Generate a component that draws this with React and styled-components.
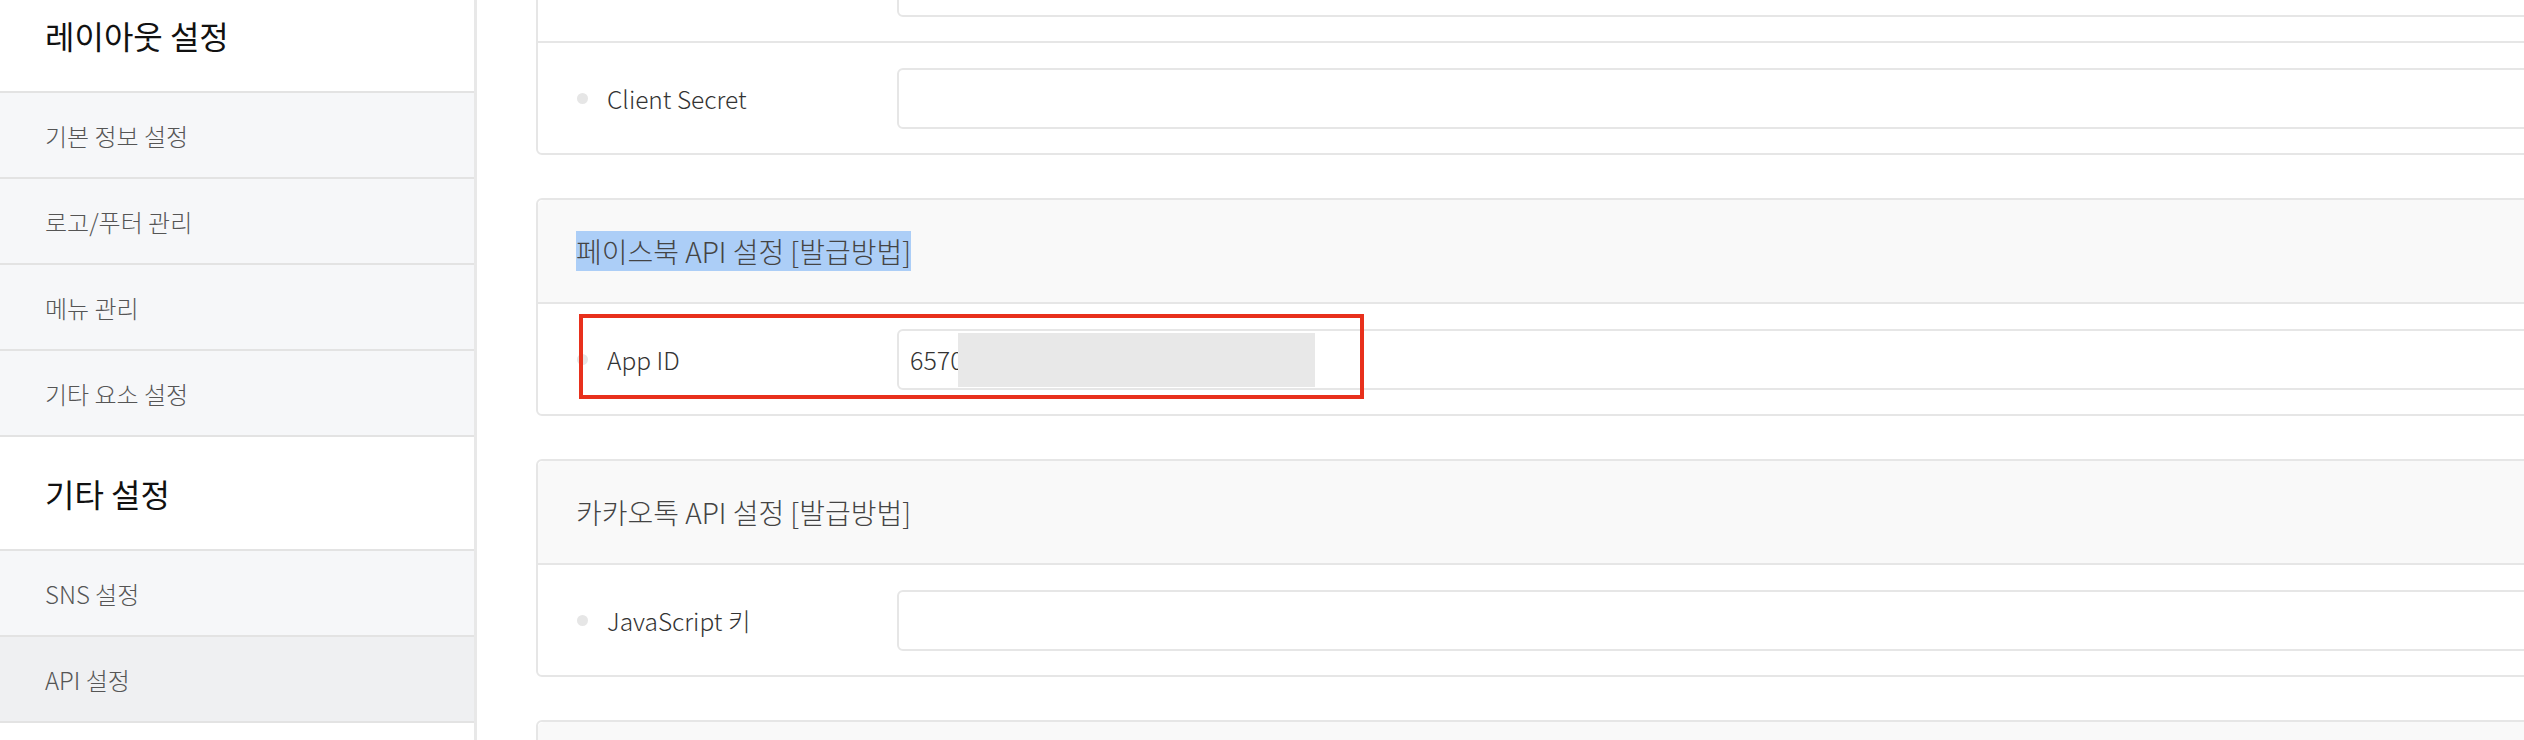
import styled, { createGlobalStyle } from 'styled-components';

const GlobalStyle = createGlobalStyle`
  html, body {
    margin: 0;
    padding: 0;
    background: #fff;
    overflow: hidden;
  }
  body {
    font-family: "Noto Sans CJK KR", "Noto Sans", sans-serif;
    font-weight: 300;
  }
`;

const Page = styled.div`
  display: flex;
  height: 740px;
  overflow: hidden;
`;

const Sidebar = styled.aside`
  width: 474px;
  flex-shrink: 0;
  background: #fff;
  border-right: 3px solid #e8e8e8;
`;

/* page is scrolled a little, so the lists start above the fold */
const SideList = styled.div`
  margin-top: -21px;
`;

const SideHeading = styled.h2`
  margin: 0;
  height: 112px;
  display: flex;
  align-items: center;
  padding-left: 45px;
  font-size: 32px;
  font-weight: 400;
  color: #111;
  border-bottom: 2px solid #e3e3e3;
`;

const SideItem = styled.div`
  height: 84px;
  display: flex;
  align-items: center;
  padding-left: 45px;
  font-size: 24px;
  color: #555;
  background: ${p => (p.$active ? '#eff0f2' : '#f6f7f9')};
  border-bottom: 2px solid #e3e3e3;
`;

const Main = styled.main`
  flex: 1;
  min-width: 0;
  padding-left: 59px;
`;

const CardList = styled.div`
  margin-top: -175px;
  width: 2400px;
  display: flex;
  flex-direction: column;
  gap: 43px;
`;

const Card = styled.section`
  background: #fff;
  border: 2px solid #e6e6e6;
  border-radius: 6px;
`;

const CardHeader = styled.div`
  height: 102px;
  display: flex;
  align-items: center;
  padding-left: 38px;
  background: #f9f9f9;
  border-bottom: 2px solid #e6e6e6;
  border-radius: 6px 6px 0 0;
  font-size: 28px;
  color: #444;
`;

const Selected = styled.span`
  display: inline-block;
  line-height: 40px;
  background: #accef7;
`;

const Row = styled.div`
  position: relative;
  height: 110px;
  display: flex;
  align-items: center;
  padding-left: 39px;

  & + & {
    border-top: 2px solid #e6e6e6;
  }
`;

const Bullet = styled.span`
  width: 11px;
  height: 11px;
  border-radius: 50%;
  background: #e6e6e6;
  margin-right: 19px;
  flex-shrink: 0;
`;

const Label = styled.div`
  width: 290px;
  flex-shrink: 0;
  font-size: 24.5px;
  color: #333;
`;

const Input = styled.div`
  position: relative;
  flex: 1;
  height: 61px;
  box-sizing: border-box;
  border: 2px solid #e6e6e6;
  border-radius: 6px;
  padding: 0 11px;
  display: flex;
  align-items: center;
  font-size: 25px;
  color: #333;
  background: #fff;
`;

const Redact = styled.span`
  position: absolute;
  left: ${p => p.$left}px;
  top: ${p => p.$top}px;
  width: ${p => p.$width}px;
  height: ${p => p.$height}px;
  background: ${p => p.$color || '#e8e8e8'};
  border-radius: ${p => p.$radius || 0}px;
`;

const Annotation = styled.div`
  position: absolute;
  left: 41px;
  top: 10px;
  width: 785px;
  height: 85px;
  box-sizing: border-box;
  border: 4px solid #e8301c;
  pointer-events: none;
`;

const sideGroups = [
  {
    title: '레이아웃 설정',
    items: ['기본 정보 설정', '로고/푸터 관리', '메뉴 관리', '기타 요소 설정'],
  },
  {
    title: '기타 설정',
    items: ['SNS 설정', 'API 설정'],
  },
];

export default function App() {
  return (
    <>
      <GlobalStyle />
      <Page>
        <Sidebar>
          <SideList>
            {sideGroups.map(g => (
              <div key={g.title}>
                <SideHeading>{g.title}</SideHeading>
                {g.items.map(item => (
                  <SideItem key={item} $active={item === 'API 설정'}>
                    {item}
                  </SideItem>
                ))}
              </div>
            ))}
          </SideList>
        </Sidebar>

        <Main>
          <CardList>
            {/* card scrolled above the top edge: only its last rows show */}
            <Card>
              <CardHeader />
              <Row>
                <Bullet />
                <Label />
                <Input>
                  <Redact $left={5} $top={24} $width={24} $height={14} $color="#f1f1f1" $radius={3} />
                </Input>
              </Row>
              <Row>
                <Bullet />
                <Label>Client Secret</Label>
                <Input />
              </Row>
            </Card>

            <Card>
              <CardHeader>
                <Selected>페이스북 API 설정 [발급방법]</Selected>
              </CardHeader>
              <Row>
                <Bullet />
                <Label>App ID</Label>
                <Input>
                  6570
                  <Redact $left={59} $top={2} $width={357} $height={54} />
                </Input>
                <Annotation />
              </Row>
            </Card>

            <Card>
              <CardHeader>카카오톡 API 설정 [발급방법]</CardHeader>
              <Row>
                <Bullet />
                <Label>JavaScript 키</Label>
                <Input />
              </Row>
            </Card>

            {/* next card, only its header top is in view */}
            <Card>
              <CardHeader />
            </Card>
          </CardList>
        </Main>
      </Page>
    </>
  );
}
